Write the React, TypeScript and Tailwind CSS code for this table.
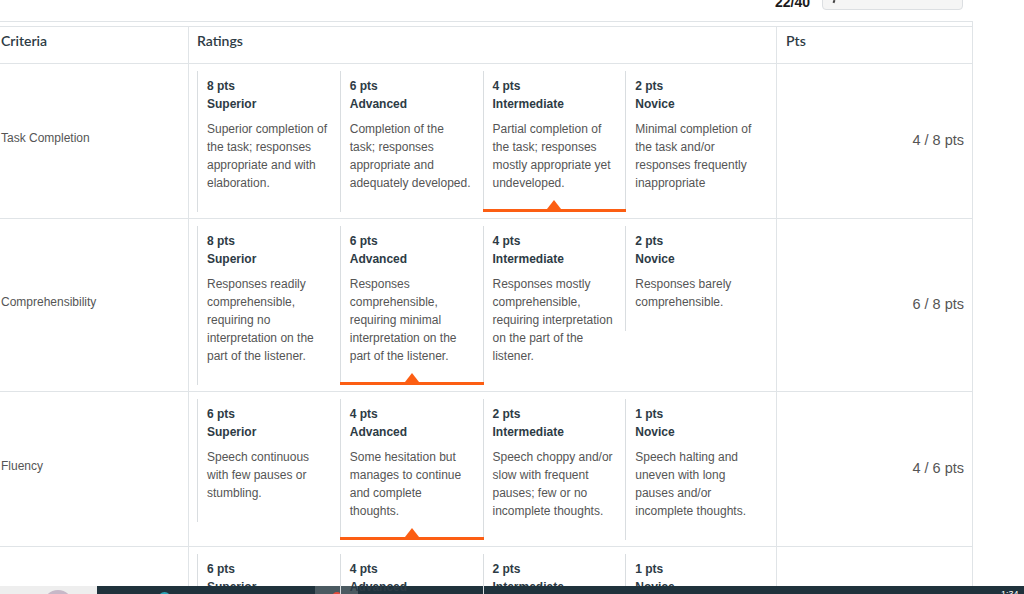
import React from 'react';

type Rating = { pts: number; title: string; text: string };
type Criterion = { name: string; score: number; max: number; selected: number; ratings: Rating[] };

const criteria: Criterion[] = [
  {
    name: 'Task Completion',
    score: 4,
    max: 8,
    selected: 2,
    ratings: [
      { pts: 8, title: 'Superior', text: 'Superior completion of the task; responses appropriate and with elaboration.' },
      { pts: 6, title: 'Advanced', text: 'Completion of the task; responses appropriate and adequately developed.' },
      { pts: 4, title: 'Intermediate', text: 'Partial completion of the task; responses mostly appropriate yet undeveloped.' },
      { pts: 2, title: 'Novice', text: 'Minimal completion of the task and/or responses frequently inappropriate' },
    ],
  },
  {
    name: 'Comprehensibility',
    score: 6,
    max: 8,
    selected: 1,
    ratings: [
      { pts: 8, title: 'Superior', text: 'Responses readily comprehensible, requiring no interpretation on the part of the listener.' },
      { pts: 6, title: 'Advanced', text: 'Responses comprehensible, requiring minimal interpretation on the part of the listener.' },
      { pts: 4, title: 'Intermediate', text: 'Responses mostly comprehensible, requiring interpretation on the part of the listener.' },
      { pts: 2, title: 'Novice', text: 'Responses barely comprehensible.' },
    ],
  },
  {
    name: 'Fluency',
    score: 4,
    max: 6,
    selected: 1,
    ratings: [
      { pts: 6, title: 'Superior', text: 'Speech continuous with few pauses or stumbling.' },
      { pts: 4, title: 'Advanced', text: 'Some hesitation but manages to continue and complete thoughts.' },
      { pts: 2, title: 'Intermediate', text: 'Speech choppy and/or slow with frequent pauses; few or no incomplete thoughts.' },
      { pts: 1, title: 'Novice', text: 'Speech halting and uneven with long pauses and/or incomplete thoughts.' },
    ],
  },
  {
    name: 'Pronunciation',
    score: 4,
    max: 6,
    selected: 1,
    ratings: [
      { pts: 6, title: 'Superior', text: 'Accurate pronunciation enhances communication.' },
      { pts: 4, title: 'Advanced', text: 'Infrequent errors do not interfere with communication.' },
      { pts: 2, title: 'Intermediate', text: 'Errors sometimes interfere with communication.' },
      { pts: 1, title: 'Novice', text: 'Errors frequently interfere with communication.' },
    ],
  },
];

function RatingCell({ rating, selected }: { rating: Rating; selected: boolean }) {
  return (
    <div
      className={`relative flex-1 border-l border-[#d9dde0] pl-[9px] pr-[11px] pt-[6px] pb-[20px] ${
        selected ? 'shadow-[1px_0_0_#d9dde0] z-10' : ''
      }`}
    >
      <div className="text-[12px] leading-[18px] font-bold text-[#2d3b45]">{rating.pts} pts</div>
      <div className="text-[12px] leading-[18px] font-bold text-[#2d3b45]">{rating.title}</div>
      <div className="mt-[7px] text-[12px] leading-[18px] text-[#555]">{rating.text}</div>
      {selected && (
        <>
          <svg
            className="absolute bottom-[3px] left-1/2 -translate-x-1/2"
            width="14"
            height="9"
            viewBox="0 0 14 9"
          >
            <path d="M7 0 L14 9 H0 Z" fill="#fc5e13" />
          </svg>
          <div className="absolute bottom-0 left-[-1px] right-[-1px] h-[3px] bg-[#fc5e13]" />
        </>
      )}
    </div>
  );
}

export default function App() {
  return (
    <div className="relative w-[1024px] h-[594px] overflow-hidden bg-white font-['Liberation_Sans',Arial,sans-serif]">
      {/* Score bar (cut off at the top) */}
      <div className="w-[973px] h-[21px] overflow-hidden flex justify-end items-start pr-[10px]">
        <span className="-mt-[8px] text-[14px] leading-5 font-bold text-[#1b1b1b]">22/40</span>
        <div className="ml-[12px] -mt-[1px] w-[141px] h-[11px] rounded-b-[4px] border border-[#dcdfe2] bg-[#f5f5f5] relative">
          <span className="absolute left-[10px] top-0 w-[2px] h-[3px] bg-[#444] rotate-[20deg]" />
        </div>
      </div>

      {/* Rubric */}
      <div className="w-[973px] border-t border-r border-[#e0e4e7] pt-[4px]">
        <div className="border-t border-[#e0e4e7]">
          {/* Header */}
          <div className="grid grid-cols-[188px_588px_196px] border-b border-[#e0e4e7] font-['Lato',sans-serif] text-[14px] leading-5 font-semibold text-[#2d3b45]">
            <div className="h-[36px] pt-[4px] pl-[1px]">Criteria</div>
            <div className="h-[36px] pt-[4px] pl-[8px] border-l border-[#e0e4e7]">Ratings</div>
            <div className="h-[36px] pt-[4px] pl-[9px] border-l border-[#e0e4e7]">Pts</div>
          </div>

          {/* Rows */}
          {criteria.map((c) => (
            <div key={c.name} className="grid grid-cols-[188px_588px_196px] border-b border-[#e0e4e7]">
              <div className="flex items-center pl-[1px] pb-[6px] text-[12px] leading-[18px] text-[#555]">
                {c.name}
              </div>
              <div className="border-l border-[#e0e4e7] pl-[8px] pr-[8px] pt-[7px] pb-[6px] flex items-start">
                {c.ratings.map((r, i) => (
                  <RatingCell key={r.title} rating={r} selected={i === c.selected} />
                ))}
              </div>
              <div className="border-l border-[#e0e4e7] flex items-center justify-end pr-[8px] pb-[1px] text-[14.5px] text-[#555]">
                {c.score} / {c.max} pts
              </div>
            </div>
          ))}
        </div>
      </div>

      {/* Taskbar overlay */}
      <div className="absolute left-0 right-0 bottom-0 h-[8px] flex overflow-hidden">
        <div className="relative w-[97px] bg-[#eeeeee]">
          <div className="absolute left-[43px] top-[4px] w-[30px] h-[30px] rounded-full bg-[#c7b8c8]" />
        </div>
        <div className="relative flex-1 bg-[#1f323c]">
          <div className="absolute left-[61px] top-[6px] w-[13px] h-[13px] rounded-full bg-[#2aa3b5]" />
          <div className="absolute left-[218px] top-0 w-[43px] h-full bg-[#4b5a61]" />
          <div className="absolute left-[235px] top-[6px] w-[10px] h-[10px] rounded-full bg-[#e04a3c]" />
          <span className="absolute left-[904px] top-[3px] text-[9px] leading-[10px] text-white">1:34</span>
        </div>
      </div>
    </div>
  );
}
